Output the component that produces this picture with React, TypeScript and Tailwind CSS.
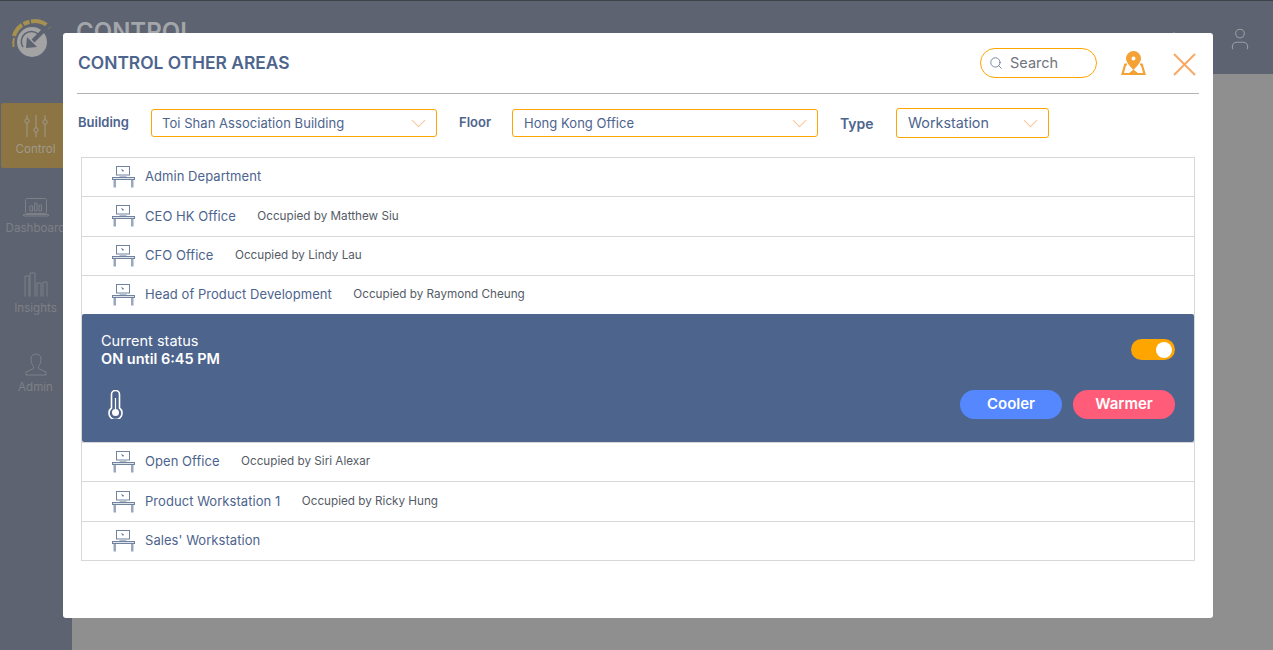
import { ChevronDown, Search, User } from "lucide-react";

const font = { fontFamily: "Inter, 'Noto Sans', sans-serif" };

const rowsTop = [
  { name: "Admin Department", by: "" },
  { name: "CEO HK Office", by: "Occupied by Matthew Siu" },
  { name: "CFO Office", by: "Occupied by Lindy Lau" },
  { name: "Head of Product Development", by: "Occupied by Raymond Cheung" },
];

const rowsBottom = [
  { name: "Open Office", by: "Occupied by Siri Alexar" },
  { name: "Product Workstation 1", by: "Occupied by Ricky Hung" },
  { name: "Sales' Workstation", by: "" },
];

const DeskIcon = () => (
  <svg width="23" height="22" viewBox="0 0 23 22" fill="none" stroke="#71829f" className="shrink-0">
    <rect x="4.500" y="0.500" width="13" height="8.500" strokeWidth="1" />
    <path d="M9.500 3.500l1.500 2 .5-1z" fill="#4d648d" stroke="#4d648d" strokeWidth="0.5" />
    <path d="M7.500 9.500h7V11h-7z" fill="#b4bdce" stroke="none" />
    <rect x="0.500" y="11.500" width="22" height="2" fill="#dfe3ea" strokeWidth="1" />
    <path d="M1.500 14h2.500v7.500h-2.500zM19 14h2.500v7.500H19z" fill="#9aa7be" stroke="none" />
  </svg>
);

const Row = ({ name, by, className }: { name: string; by: string; className: string }) => (
  <div className={`flex items-center pl-[30px] ${className}`}>
    <DeskIcon />
    <span className="ml-[10px] text-[13px] text-[#4d648d] tracking-[0.05px]">{name}</span>
    {by && <span className="ml-[21.500px] text-[11.700px] text-[#555b66]">{by}</span>}
  </div>
);

const SelectBox = ({ value, className }: { value: string; className: string }) => (
  <div className={`flex items-center justify-between border border-[#ffa500] rounded-[3px] ${className}`}>
    <span className="text-[13px] text-[#4d648d] tracking-[0.05px] pt-px">{value}</span>
    <ChevronDown size={25} strokeWidth={1} className="text-[#fac898]" />
  </div>
);

const NavItem = ({ label, active, children }: { label: string; active?: boolean; children: React.ReactNode }) => (
  <div className={`flex flex-col items-center justify-end pb-[12px] ml-[1px] w-[69px] h-[65px] rounded-l-[2px] ${active ? "bg-[#8c7443] text-[#a09a8a]" : "text-[#7d8087]"}`}>
    {children}
    <span className="mt-[4px] text-[11.600px] leading-[14px] whitespace-nowrap">{label}</span>
  </div>
);

export default function App() {
  return (
    <div style={font} className="relative w-[1273px] h-[650px] overflow-hidden bg-[#8f8f8f] border-t border-[#3f4247]">
      {/* page behind the dialog */}
      <div className="flex h-[73px] bg-[#5d6370]">
        <div className="w-[72px] pl-[11px] pt-[15px]">
          <svg width="42" height="42" viewBox="0 0 42 42" fill="none">
            <path d="M2.500 31A19.500 19.500 0 0 1 3 22" stroke="#a8904f" strokeWidth="2" />
            <path d="M3 20A19.500 19.500 0 0 1 11 9" stroke="#a8904f" strokeWidth="4" />
            <path d="M12.500 8A19.500 19.500 0 0 1 18.500 6" stroke="#a8904f" strokeWidth="4" />
            <path d="M20 5.500A19.500 19.500 0 0 1 38.500 12" stroke="#a8904f" strokeWidth="4" />
            <circle cx="21" cy="26" r="15" fill="#a3a3a3" />
            <path d="M12 31a10 10 0 0 1 15-13" stroke="#5d6370" strokeWidth="1.500" />
            <path d="M39 8L22 25" stroke="#5d6370" strokeWidth="4" />
            <path d="M15 32l1-11 10 10z" fill="#5d6370" />
          </svg>
        </div>
        <div className="flex-1 pl-[4px] pt-[15px] text-[24px] leading-[32px] font-semibold text-[#a3a6ab]">CONTROL</div>
        <div className="w-[64px] pt-[25px] pr-[2px] flex justify-center text-[#9a9da3]">
          <User size={26} strokeWidth={1} />
        </div>
      </div>
      <div className="absolute left-[1146px] top-[28px] text-[13px] text-[#9a9da3]">English</div>
      <div className="absolute left-0 top-[73px] bottom-0 w-[72px] bg-[#5d6370] pt-[29px] flex flex-col gap-[14.300px]">
        <NavItem label="Control" active>
          <svg width="26" height="24" viewBox="0 0 26 24" fill="none" stroke="currentColor" strokeWidth="1">
            <path d="M4 1v4M4 9v14M13 1v13M13 18v5M22 1v5M22 10v13" />
            <circle cx="4" cy="7" r="2.200" />
            <circle cx="13" cy="16" r="2.200" />
            <circle cx="22" cy="8" r="2.200" />
          </svg>
        </NavItem>
        <NavItem label="Dashboard">
          <svg width="26" height="19" viewBox="0 0 26 19" fill="none" stroke="currentColor" strokeWidth="1">
            <rect x="2.500" y="0.500" width="21" height="15" rx="1" />
            <path d="M0.500 16.500h25v1.500H0.500zM7 13V8h2.500v5zM11.500 13V5h2.500v8zM16 13V7h2.500v6z" />
          </svg>
        </NavItem>
        <NavItem label="Insights">
          <svg width="24" height="25" viewBox="0 0 24 25" fill="none" stroke="currentColor" strokeWidth="1">
            <path d="M1 24.500V4h4v20.500M6 24.500V1h5v23.500M13 24.500V11h4v13.500M19 24.500V10h4v14.500" />
          </svg>
        </NavItem>
        <NavItem label="Admin">
          <svg width="22" height="23" viewBox="0 0 22 23" fill="none" stroke="currentColor" strokeWidth="1">
            <path d="M11 1c3 0 5 2 5 5 0 3-1 6-2.500 7.500v2L21 19v3H1v-3l7.500-3.500v-2C7 12 6 9 6 6c0-3 2-5 5-5z" />
          </svg>
        </NavItem>
      </div>

      {/* dialog */}
      <div className="absolute left-[63px] top-[32px] w-[1150px] h-[585px] bg-white rounded-[3px] px-[14px]">
        <div className="flex items-center h-[61px] border-b border-[#b3b3b3] pl-px">
          <h2 className="text-[17.400px] font-semibold text-[#4d648d]">CONTROL OTHER AREAS</h2>
          <div className="ml-auto flex items-center w-[117px] h-[30px] border border-[#ffa500] rounded-full pl-[8px]">
            <Search size={14} strokeWidth={1.500} className="text-[#6b7a96]" />
            <span className="ml-[7px] text-[14.500px] text-[#70757f]">Search</span>
          </div>
          <svg width="25" height="24" viewBox="0 0 25 24" className="ml-[24px] mb-[1px]">
            <path d="M6 13.500H4.200L1.500 23h22L20.800 13.500H19" fill="none" stroke="#f4a136" strokeWidth="2.200" />
            <path d="M8 23l4.500-3.500L17 23" fill="#f4a136" stroke="#f4a136" strokeWidth="1.500" />
            <path fillRule="evenodd" d="M12.500 0a7.500 7.500 0 0 1 7.500 7.500c0 4-4.500 8-7.500 11.500C9.500 15.500 5 11.500 5 7.500A7.500 7.500 0 0 1 12.500 0zm0 5.500a2 2 0 1 0 0 4 2 2 0 0 0 0-4z" fill="#f4a136" />
          </svg>
          <svg width="23" height="23" viewBox="0 0 23 23" fill="none" stroke="#f9a866" strokeWidth="2" className="ml-[27px] mr-[3px] mt-[3px]">
            <path d="M1 1l21 21M22 1L1 22" />
          </svg>
        </div>

        <div className="flex items-center mt-[14px] pl-px">
          <span className="w-[73px] text-[13px] font-semibold text-[#4d648d]">Building</span>
          <SelectBox value="Toi Shan Association Building" className="w-[286px] h-[28px] pl-[10px] pr-[5px]" />
          <span className="ml-[22px] w-[53px] text-[13px] font-semibold text-[#4d648d]">Floor</span>
          <SelectBox value="Hong Kong Office" className="w-[306px] h-[28px] pl-[11px] pr-[5px]" />
          <span className="ml-[22px] w-[56px] text-[14px] font-semibold text-[#4d648d]">Type</span>
          <div className="flex items-center justify-between border border-[#ffa500] rounded-[3px] w-[153px] h-[30px] pl-[11px] pr-[5px]">
            <span className="text-[14.300px] text-[#4d648d]">Workstation</span>
            <ChevronDown size={25} strokeWidth={1} className="text-[#fac898]" />
          </div>
        </div>

        <div className="mt-[19px] mx-[4px] border border-[#d8d8d8]">
          {rowsTop.map((r, i) => (
            <Row
              key={r.name}
              name={r.name}
              by={r.by}
              className={i === rowsTop.length - 1 ? "h-[38.100px]" : "h-[39.300px] border-b border-[#d8d8d8]"}
            />
          ))}
          <div className="bg-[#4d648d] h-[128px] rounded-[2px] px-[19px] pt-[18px] pb-[23px] flex flex-col justify-between text-white">
            <div className="flex items-center justify-between">
              <div className="text-[14.500px] leading-[18px]">
                <div>Current status</div>
                <div className="font-semibold">ON until 6:45 PM</div>
              </div>
              <div className="w-[44px] h-[21px] rounded-full bg-[#ffa500] flex items-center justify-end pr-[3px]">
                <div className="w-[16px] h-[16px] rounded-full bg-white" />
              </div>
            </div>
            <div className="flex items-end justify-between">
              <svg width="15" height="29" viewBox="0 0 15 29" fill="none" stroke="white" strokeWidth="1.600" className="ml-[7px]">
                <path d="M3.500 18V4.500a4 4 0 0 1 8 0V18a6.500 6.500 0 1 1-8 0z" />
                <path d="M7.500 8v14" strokeWidth="1.200" />
                <circle cx="7.500" cy="22.500" r="3.500" fill="white" stroke="none" />
              </svg>
              <div className="flex gap-[11px]">
                <button className="w-[102px] h-[29px] rounded-full bg-[#5588ff] text-[15px] font-semibold">Cooler</button>
                <button className="w-[102px] h-[29px] rounded-full bg-[#ff5c7a] text-[15px] font-semibold">Warmer</button>
              </div>
            </div>
          </div>
          <div className="border-t border-[#d8d8d8]">
            {rowsBottom.map((r, i) => (
              <Row
                key={r.name}
                name={r.name}
                by={r.by}
                className={i === rowsBottom.length - 1 ? "h-[38.500px]" : "h-[39.500px] border-b border-[#d8d8d8]"}
              />
            ))}
          </div>
        </div>
      </div>
    </div>
  );
}
